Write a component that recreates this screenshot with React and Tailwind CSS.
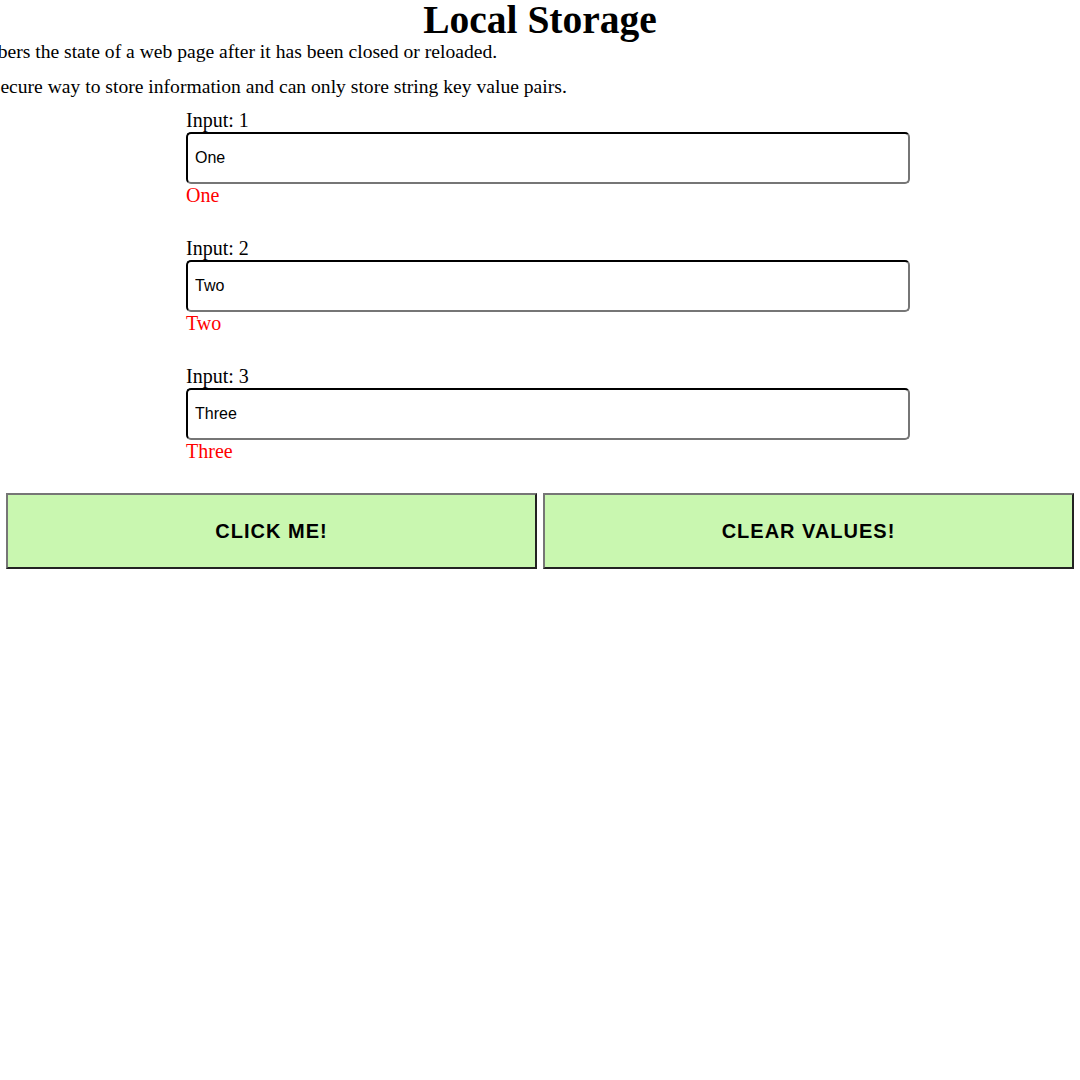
import React, { useState } from 'react';

const serif = "font-['Liberation_Serif','Times_New_Roman',serif]";
const sans = "font-['Liberation_Sans',Arial,sans-serif]";

function Field({ n, value, onChange }) {
  return (
    <div className="mb-[30px]">
      <label className="block leading-[23px]">Input: {n}</label>
      <input
        value={value}
        onChange={e => onChange(e.target.value)}
        className={`block w-full h-[52px] rounded-[5px] border-2 border-t-black border-l-black border-r-[#767676] border-b-[#767676] bg-white pl-[7px] text-[16px] text-black outline-none ${sans}`}
      />
      <div className="leading-[23px] text-[#ff0000]">{value}</div>
    </div>
  );
}

export default function App() {
  const [vals, setVals] = useState(['One', 'Two', 'Three']);
  const set = i => v => setVals(p => p.map((x, j) => (j === i ? v : x)));

  return (
    <div className={`w-full min-h-screen overflow-x-hidden bg-white text-black text-[20px] ${serif}`}>
      <h1 className="text-center text-[39.5px] font-bold leading-[40px]">Local Storage</h1>

      <div className="whitespace-nowrap text-[19.6px]">
        <p className="-ml-[171px] leading-[23px]">Local Storage remembers the state of a web page after it has been closed or reloaded.</p>
        <p className="-ml-[183px] mt-[12px] leading-[23px]">Local Storage is not a secure way to store information and can only store string key value pairs.</p>
      </div>

      <div className="ml-[186px] mt-[11px] w-[724px]">
        {vals.map((v, i) => (
          <Field key={i} n={i + 1} value={v} onChange={set(i)} />
        ))}
      </div>

      <div className="grid grid-cols-2 gap-[6px] px-[6px]">
        <button className={`h-[76px] border-2 border-t-[#767676] border-l-[#767676] border-r-[#222] border-b-[#222] bg-[#c9f7b0] text-[20px] font-bold tracking-[1px] ${sans}`}>
          CLICK ME!
        </button>
        <button
          onClick={() => setVals(['', '', ''])}
          className={`h-[76px] border-2 border-t-[#767676] border-l-[#767676] border-r-[#222] border-b-[#222] bg-[#c9f7b0] text-[20px] font-bold tracking-[1px] ${sans}`}
        >
          CLEAR VALUES!
        </button>
      </div>
    </div>
  );
}
